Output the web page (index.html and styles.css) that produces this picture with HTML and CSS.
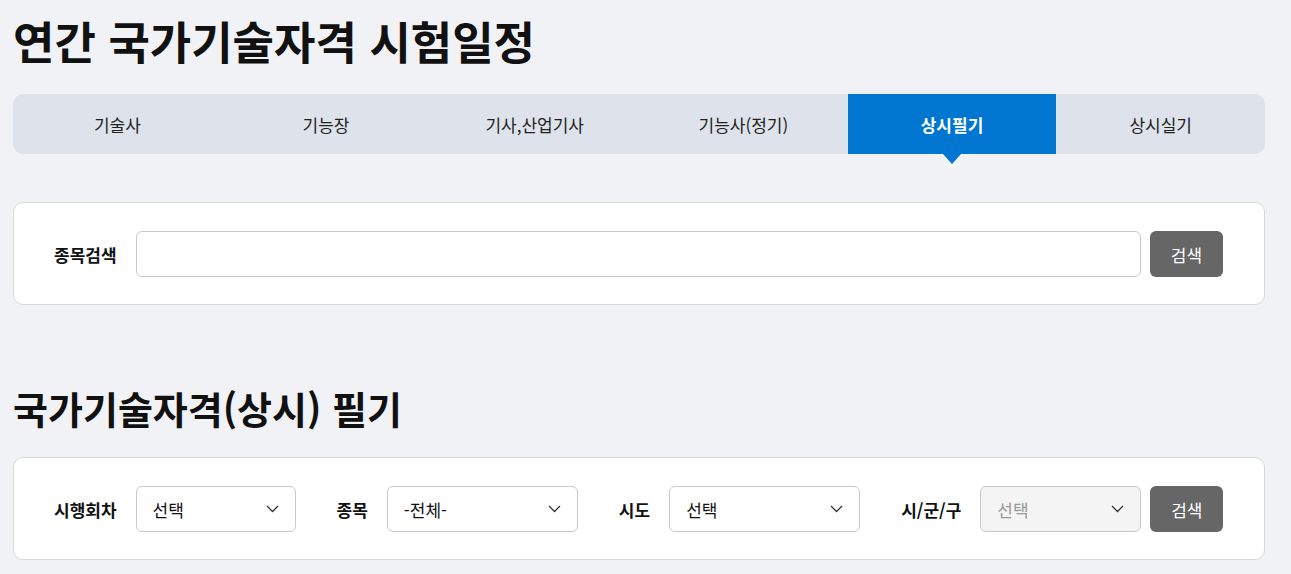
FILE: index.html
```html
<!DOCTYPE html>
<html lang="ko">
<head>
    <meta charset="UTF-8">
    <title>연간 국가기술자격 시험일정</title>
    <link rel="stylesheet" href="styles.css">
</head>
<body>
<div class="container">
    <h1 class="page-title">연간 국가기술자격 시험일정</h1>

    <ul class="tabs">
        <li><a href="#">기술사</a></li>
        <li><a href="#">기능장</a></li>
        <li><a href="#">기사,산업기사</a></li>
        <li><a href="#">기능사(정기)</a></li>
        <li class="on"><a href="#">상시필기</a></li>
        <li><a href="#">상시실기</a></li>
    </ul>

    <div class="search-box">
        <label class="label" for="jmNm">종목검색</label>
        <input type="text" id="jmNm" class="input">
        <button class="btn-search">검색</button>
    </div>

    <h2 class="sub-title">국가기술자격(상시) 필기</h2>

    <div class="search-box">
        <label class="label">시행회차</label>
        <div class="select w160">
            <select><option>선택</option></select>
            <svg class="arrow" width="13" height="8" viewBox="0 0 13 8"><path d="M1 1l5.5 5.5L12 1" fill="none" stroke="#333" stroke-width="1.3"/></svg>
        </div>
        <label class="label gap">종목</label>
        <div class="select w191">
            <select><option>-전체-</option></select>
            <svg class="arrow" width="13" height="8" viewBox="0 0 13 8"><path d="M1 1l5.5 5.5L12 1" fill="none" stroke="#333" stroke-width="1.3"/></svg>
        </div>
        <label class="label gap">시도</label>
        <div class="select w191">
            <select><option>선택</option></select>
            <svg class="arrow" width="13" height="8" viewBox="0 0 13 8"><path d="M1 1l5.5 5.5L12 1" fill="none" stroke="#333" stroke-width="1.3"/></svg>
        </div>
        <label class="label gap">시/군/구</label>
        <div class="select w161 disabled">
            <select disabled><option>선택</option></select>
            <svg class="arrow" width="13" height="8" viewBox="0 0 13 8"><path d="M1 1l5.5 5.5L12 1" fill="none" stroke="#333" stroke-width="1.3"/></svg>
        </div>
        <button class="btn-search">검색</button>
    </div>
</div>
</body>
</html>
```

FILE: styles.css
```css
* {
    box-sizing: border-box;
}
body {
    margin: 0;
    background-color: #f1f2f6;
    font-family: "Noto Sans CJK KR", "Noto Sans", sans-serif;
    color: #111;
}
.container {
    width: 1252px;
    margin-left: 13px;
}
.page-title {
    margin: 0;
    padding-top: 12px;
    font-size: 45px;
    line-height: 58px;
    font-weight: 700;
}
.tabs {
    display: flex;
    margin: 24px 0 0;
    padding: 0;
    list-style: none;
    height: 60px;
    background-color: #dee2ea;
    border-radius: 10px;
}
.tabs li {
    flex: 1;
    position: relative;
}
.tabs li a {
    display: flex;
    align-items: center;
    justify-content: center;
    height: 100%;
    font-size: 17px;
    color: #222;
    text-decoration: none;
}
.tabs li.on a {
    background-color: #0076d1;
    color: #fff;
    font-weight: 700;
}
.tabs li.on:after {
    content: '';
    position: absolute;
    left: 50%;
    bottom: -10px;
    margin-left: -9px;
    border-top: 10px solid #0076d1;
    border-left: 9px solid transparent;
    border-right: 9px solid transparent;
}
.search-box {
    display: flex;
    align-items: center;
    margin-top: 48px;
    padding: 28px 41px 27px 40px;
    background-color: #fff;
    border: 1px solid #d8d8d8;
    border-radius: 10px;
}
.label {
    flex: none;
    margin-right: 19px;
    font-size: 17px;
    font-weight: 700;
}
.label.gap {
    margin-left: 41px;
}
.input {
    flex: 1;
    height: 46px;
    border: 1px solid #c9c9c9;
    border-radius: 6px;
    outline: none;
}
.btn-search {
    flex: none;
    width: 73px;
    height: 46px;
    margin-left: 9px;
    border: 0;
    border-radius: 6px;
    background-color: #666;
    color: #fff;
    font-family: inherit;
    font-size: 17px;
}
.sub-title {
    margin: 78px 0 0;
    font-size: 38px;
    line-height: 50px;
    font-weight: 700;
}
.sub-title + .search-box {
    margin-top: 24px;
}
.select {
    position: relative;
    flex: none;
    height: 46px;
}
.select select {
    width: 100%;
    height: 100%;
    padding: 0 40px 0 16px;
    border: 1px solid #c9c9c9;
    border-radius: 6px;
    background-color: #fff;
    font-family: inherit;
    font-size: 17px;
    color: #111;
    -webkit-appearance: none;
    appearance: none;
    outline: none;
}
.select .arrow {
    position: absolute;
    right: 17px;
    top: 19px;
    pointer-events: none;
}
.select.disabled select {
    background-color: #f4f4f4;
    color: #999;
    opacity: 1;
}
.w160 { width: 160px; }
.w191 { width: 191px; }
.w161 { width: 161px; }
```
